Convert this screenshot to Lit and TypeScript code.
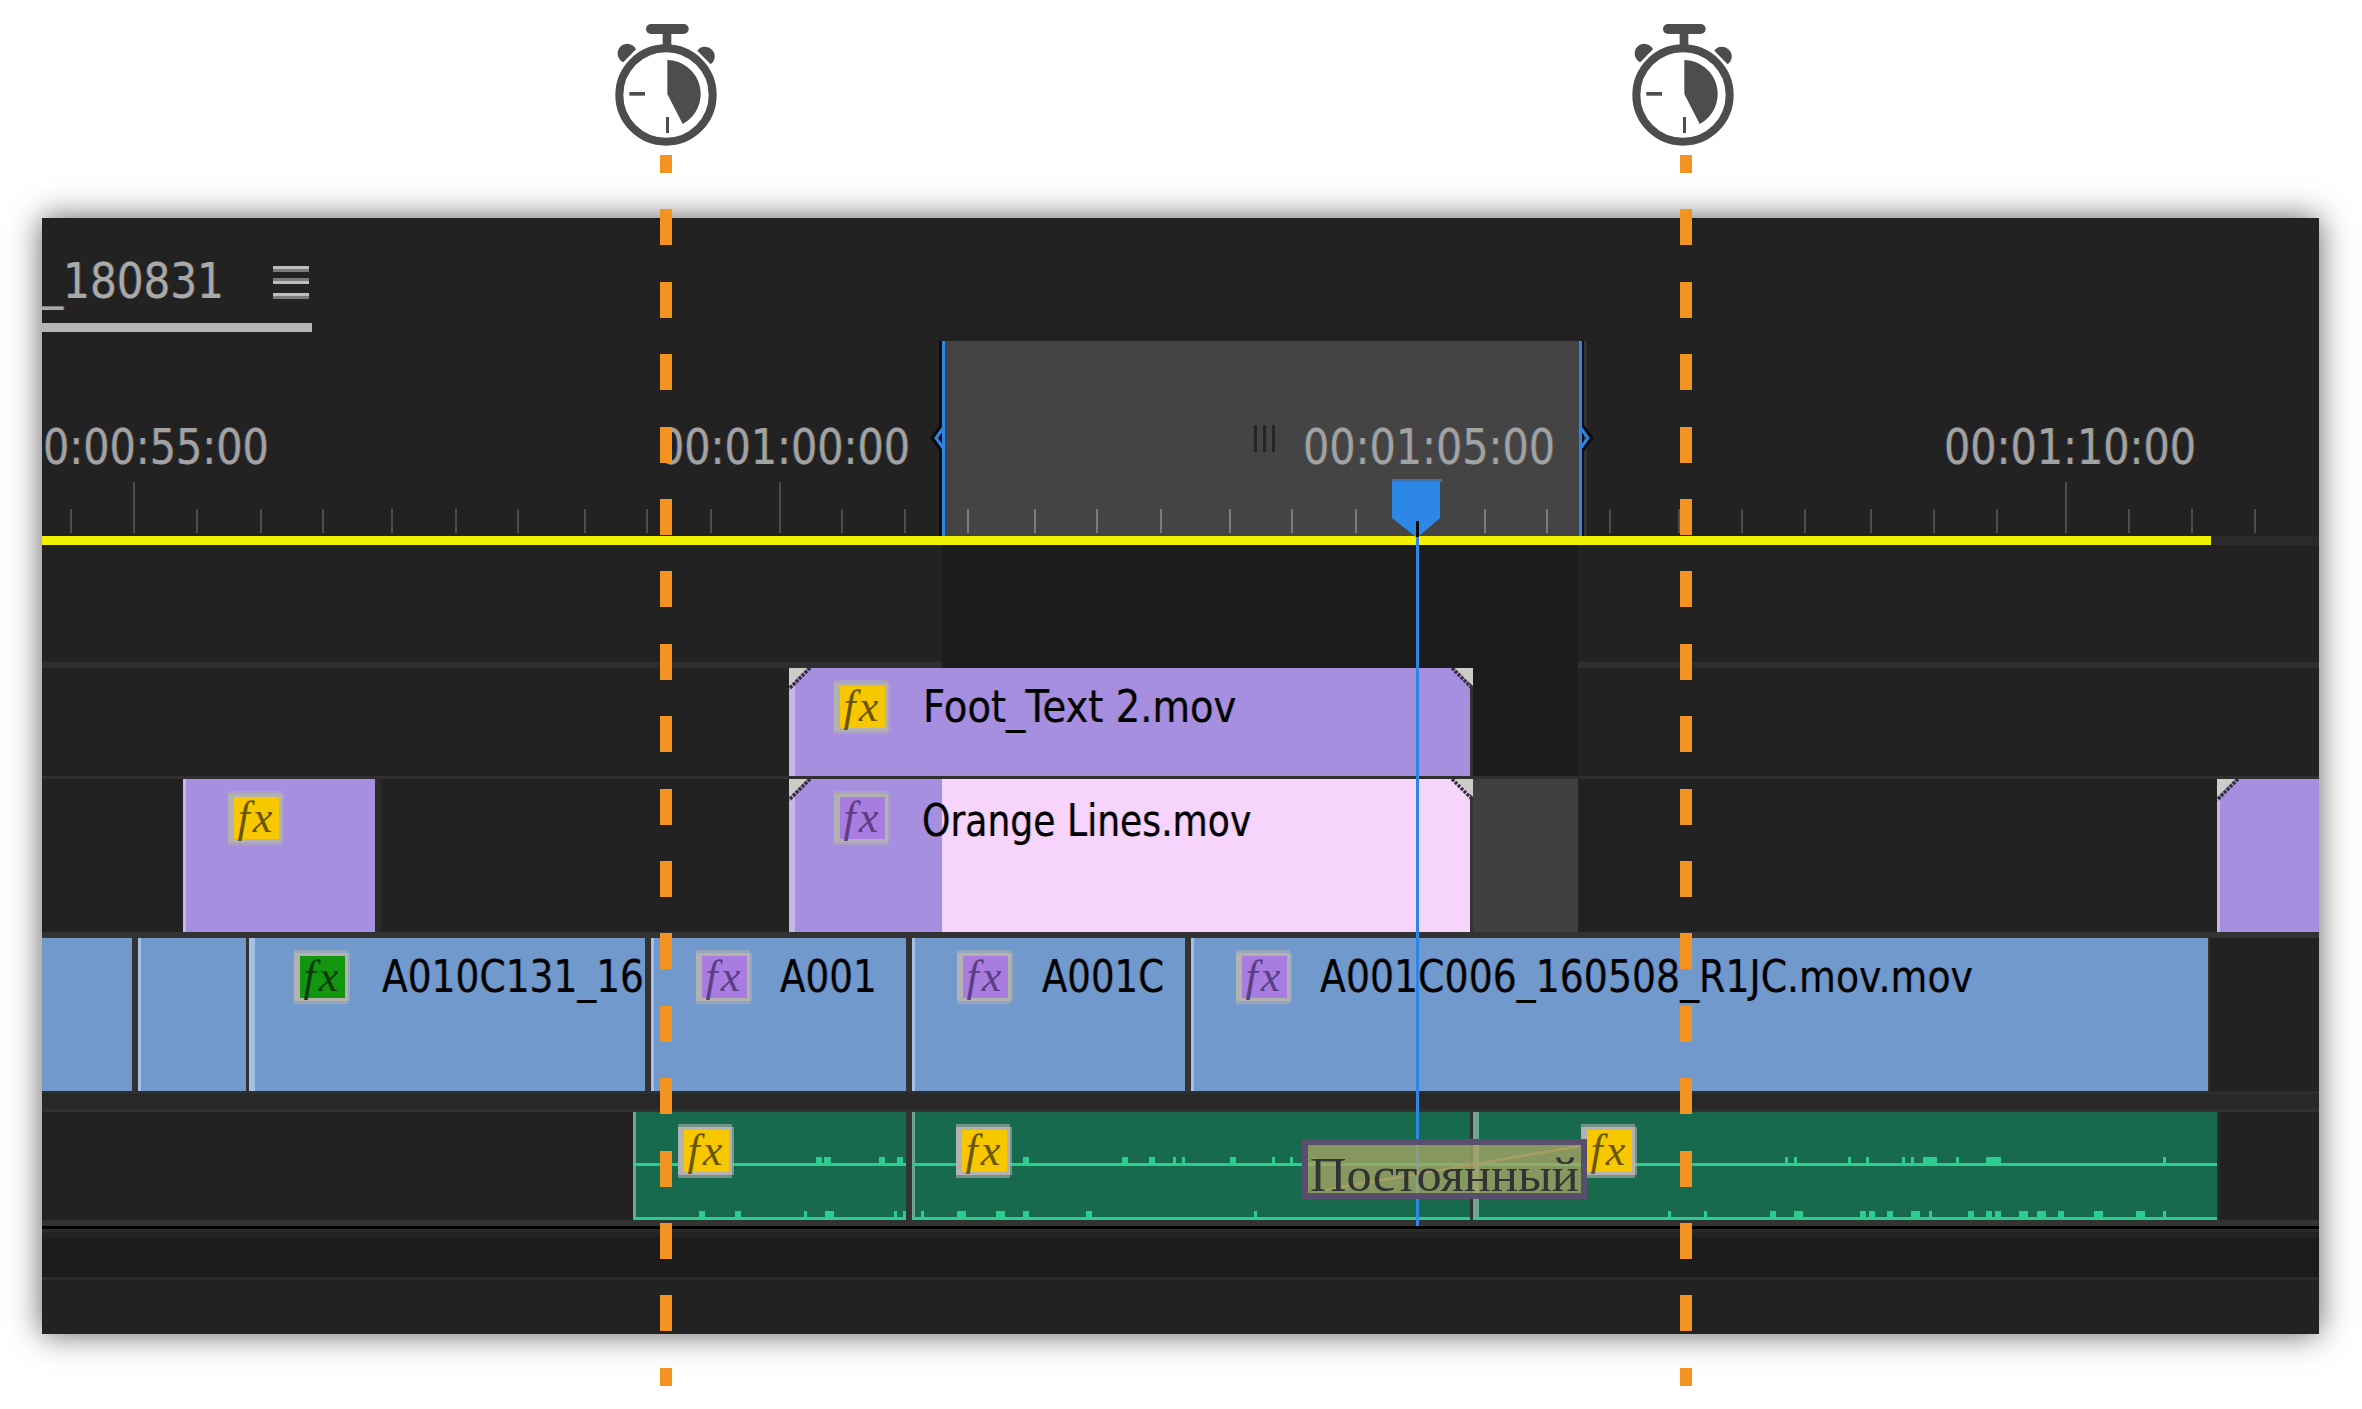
import { LitElement, html, css, svg } from "lit";
import { customElement } from "lit/decorators.js";

const PANEL_X = 42;
const px = (v: number) => `${v - PANEL_X}px`;
const TICKS: [number, boolean][] = [70,133,196,260,322,391,455,517,584,646,710,779,841,904,967,1034,1096,1160,1229,1291,1355,1484,1546,1609,1678,1741,1804,1870,1933,1996,2065,2128,2191,2254]
  .map((x) => [x, x === 133 || x === 779 || x === 2065] as [number, boolean]);
const LABELS: [string, number][] = [["0:00:55:00", 42.5], ["00:01:00:00", 658], ["00:01:05:00", 1303], ["00:01:10:00", 1944]];
const MID: [number, number][] = [[816,822],[824,831],[879,885],[897,903],[1023,1029],[1122,1128],[1149,1155],[1173,1176],[1182,1185],[1230,1236],[1272,1275],[1290,1293],[1313,1316],[1785,1788],[1794,1797],[1848,1851],[1866,1869],[1902,1905],[1911,1914],[1923,1937],[1956,1959],[1986,2001],[2163,2166]];
const LOW: [number, number][] = [[699,705],[735,741],[804,807],[825,834],[894,897],[903,906],[921,924],[957,966],[996,1005],[1023,1029],[1086,1092],[1254,1257],[1668,1671],[1704,1707],[1770,1776],[1794,1803],[1860,1866],[1869,1875],[1887,1893],[1911,1920],[1929,1932],[1968,1974],[1986,1992],[1995,2001],[2019,2028],[2037,2046],[2058,2064],[2094,2103],[2136,2145],[2163,2166]];
const VIDEO: [number, number, number][] = [[42,132,0],[138,246,3],[249,645,6],[651,906,3],[912,1185,3],[1191,2208,3]];
const VGAPS: [number, number][] = [[132,138],[246,249],[645,651],[906,912],[1185,1191],[2208,2210]];
const AUDIO: [number, number, number][] = [[633,906,3],[912,1470,3],[1473,2217,6]];
const VNAMES: [string, number, number][] = [["A010C131_16", 382, .835],["A001", 780, .83],["A001C", 1042, .824],["A001C006_160508_R1JC.mov.mov", 1320, .841]];

const fx = (x: number, cls: string) => html`<div class="fx ${cls}" style="left:${px(x)}"><span>fx</span></div>`;
const name = (text: string, x: number, sx: number, cls = "") =>
  html`<span class="name ${cls}" style="left:${px(x)};transform:scaleX(${sx})">${text}</span>`;
const cornerL = svg`<polygon points="0,0 18,0 0,18" fill="#cdcdc8"/><path d="M21 0 L0 21" stroke="#33303a" stroke-width="3.5" stroke-dasharray="3 1.2"/>`;
const cornerR = svg`<polygon points="24,0 6,0 24,18" fill="#cdcdc8"/><path d="M3 0 L24 21" stroke="#33303a" stroke-width="3.5" stroke-dasharray="3 1.2"/>`;

const watch = svg`
  <rect x="258" y="72" width="128" height="30" rx="15"/>
  <rect x="308" y="100" width="26" height="40"/>
  <circle cx="318" cy="285" r="140" fill="none" stroke="#4d4d4d" stroke-width="24"/>
  <path d="M228 148 A29 29 0 1 0 190 187 Z"/>
  <path d="M412 152 A29 29 0 1 1 452 193 Z"/>
  <path d="M322 180 A102 102 0 0 1 368 372 L322 282 Z"/>
  <rect x="208" y="276" width="47" height="11"/>
  <rect x="318" y="351" width="9" height="48"/>`;

@customElement("app-root")
export class AppRoot extends LitElement {
  static styles = css`
    :host { display: block; position: relative; width: 2362px; height: 1409px; overflow: hidden; background: #fff; padding-top: 218px; box-sizing: border-box; font-family: "DejaVu Sans", sans-serif; }
    .panel { position: relative; margin: 0 43px 0 42px; height: 1116px; background: #222; box-shadow: 0 0 30px rgba(0,0,0,.62); overflow: hidden; display: flex; flex-direction: column; }
    .head { height: 123px; flex: none; }
    .tab { width: 270px; height: 114px; box-sizing: border-box; border-bottom: 9px solid #b5b5b5; display: flex; align-items: flex-start; }
    .title { flex: none; width: 231px; margin-top: 35px; font-size: 49px; line-height: 57px; white-space: nowrap; color: #a9a9a9; }
    .title span { display: inline-block; transform: scaleX(.86); transform-origin: left top; }
    .lt { text-shadow: -1px 0 0 rgba(45,100,170,.5), 1px 0 0 rgba(170,100,40,.5); }
    .burger { flex: none; width: 36px; margin-top: 48px; display: flex; flex-direction: column; }
    .burger i { display: block; height: 6px; }
    .burger i:nth-child(1) { background: linear-gradient(#bdbdbd 50%, #7a7a7a 50%); }
    .burger i:nth-child(2) { margin-top: 6px; background: linear-gradient(#7a7a7a 50%, #bdbdbd 50%); }
    .burger i:nth-child(3) { margin-top: 9px; background: linear-gradient(#bdbdbd 50%, #7a7a7a 50%); }
    .ruler { height: 195px; flex: none; position: relative; }
    .sel { position: absolute; top: 0; bottom: 0; background: #444; }
    .edge { position: absolute; top: 0; bottom: 0; }
    .blue { background: #2d87e6; }
    .black { background: #0c0c0c; }
    .side { background: #333; }
    .tick { position: absolute; width: 2px; bottom: 3px; height: 24px; background: #4c4c4c; }
    .tick.long { height: 51px; }
    .tick.on { background: #7c7c7c; }
    .time { position: absolute; top: 78px; font-size: 49px; line-height: 57px; color: #a2a2a2; white-space: nowrap; transform: scaleX(.843); transform-origin: left top; }
    .grip { position: absolute; left: 1212px; top: 84px; display: flex; gap: 6px; }
    .grip i { display: block; width: 3px; height: 27px; background: #262626; }
    .chev { position: absolute; left: 885px; top: 80px; overflow: visible; }
    .yellow { height: 9px; flex: none; background: #2a2a2a; position: relative; }
    .yellow i { display: block; height: 9px; width: 2169px; background: #f2f200; }
    .blank { height: 117px; flex: none; }
    .sep { flex: none; }
    .s6 { height: 6px; background: #2e2e2e; }
    .s3 { height: 3px; background: #303030; }
    .s6b { height: 6px; background: #333; }
    .track { position: relative; flex: none; z-index: 1; }
    .h108 { height: 108px; }
    .h153 { height: 153px; }
    .clip { position: absolute; top: 0; bottom: 0; overflow: hidden; }
    .purple { background: #a68fdf; }
    .sky { background: #7199cc; }
    .forest { background: #176a4d; }
    .lit { position: absolute; left: 0; top: 0; bottom: 0; }
    .purple .lit { background: #c6b8ea; }
    .sky .lit { background: #a4c0e4; }
    .forest .lit { background: #6fa593; }
    .pink { position: absolute; left: 153px; right: 0; top: 0; bottom: 0; background: #f7d4fb; }
    .gapbar { position: absolute; top: 0; bottom: 0; }
    .corner { position: absolute; top: 0; width: 24px; height: 24px; }
    .dim { position: absolute; left: 900px; width: 636px; top: 327px; height: 231px; background: #1c1c1c; }
    .name { position: absolute; top: 16px; font-size: 45px; line-height: 45px; color: #000; white-space: nowrap; transform-origin: left top; text-shadow: -1px 0 0 rgba(122,60,0,.3), 1px 0 0 rgba(30,90,210,.3); }
    .name.low { top: 19px; }
    .fx { position: absolute; top: 15px; width: 54px; height: 48px; margin-left: -6px; box-sizing: border-box; border: solid #b2b2b2; border-width: 3px 3px 3px 6px; box-shadow: 2px 0 0 rgba(175,175,175,.6), 0 3px 0 rgba(175,175,175,.6), 0 -3px 0 rgba(175,175,175,.6); display: flex; align-items: center; justify-content: center; font-family: "Liberation Serif", serif; font-style: italic; font-size: 44px; line-height: 42px; letter-spacing: 3px; }
    .fx span { display: block; }
    .y { background: #f7c800; color: #6b5600; }
    .g { background: #13960f; color: #0b3a0c; }
    .v { background: #a97ce0; color: #5a3f85; }
    .line { position: absolute; height: 3px; background: #2bce8e; }
    .line.m { top: 51px; }
    .line.b { top: 105px; }
    .wv { position: absolute; height: 6px; background: #2bce8e; }
    .wv.m { top: 45px; }
    .wv.b { top: 99px; }
    .fill { flex: none; }
    .playhead { position: absolute; left: 1350px; top: 261px; width: 50px; height: 747px; z-index: 2; }
    .playhead svg { display: block; position: absolute; left: 0; top: 0; }
    .phline { position: absolute; left: 24px; top: 58px; bottom: 0; width: 3px; background: #2d87e6; }
    .phdark { position: absolute; left: 24px; top: 42px; width: 3px; height: 16px; background: #0c0c0c; }
    .tip { position: absolute; left: 1260px; top: 921px; width: 285px; height: 60px; box-sizing: border-box; border: solid #574f6b; border-width: 6px; z-index: 3; background: rgba(165,165,100,.78); }
    .tip svg { position: absolute; left: 0; top: 0; }
    .tip span { position: absolute; left: 2px; top: 12px; font-family: "Liberation Serif", serif; font-size: 48px; line-height: 36px; height: 36px; color: #333; white-space: nowrap; transform: scaleX(1.05); transform-origin: left top; }
    .dash { position: absolute; top: 155px; width: 12px; height: 1231px; background: repeating-linear-gradient(to bottom, #f39321 0 18px, transparent 18px 54.4px, #f39321 54.4px 72.4px); z-index: 4; }
    .watch { position: absolute; top: 0; width: 200px; height: 240px; fill: #4d4d4d; z-index: 4; }
  `;

  render() {
    return html`
      <svg class="watch" style="left:560px" viewBox="0 0 600 720">${watch}</svg>
      <svg class="watch" style="left:1577.33px" viewBox="0 0 600 720">${watch}</svg>
      <div class="panel">
        <div class="head">
          <div class="tab">
            <div class="title"><span class="lt">_180831</span></div>
            <div class="burger"><i></i><i></i><i></i></div>
          </div>
        </div>
        <div class="ruler">
          <div class="sel" style="left:${px(945)};width:634px"></div>
          ${TICKS.map(([x, long]) => html`<i class="tick ${long ? "long" : ""} ${x > 945 && x < 1578 ? "on" : ""}" style="left:${px(x)}"></i>`)}
          ${LABELS.map(([t, x]) => html`<span class="time lt" style="left:${px(x)}">${t}</span>`)}
          <div class="grip"><i></i><i></i><i></i></div>
          <div class="edge black" style="left:${px(939)};width:3px"></div>
          <div class="edge blue" style="left:${px(942)};width:3px"></div>
          <div class="edge blue" style="left:${px(1579)};width:3px"></div>
          <div class="edge black" style="left:${px(1582)};width:2px"></div>
          <div class="edge side" style="left:${px(1584)};width:3px"></div>
          <svg class="chev" width="670" height="32" viewBox="0 0 670 32" fill="none">
            <path d="M15 6 L7 17 L15 28" stroke="#0c0c0c" stroke-width="6"/>
            <path d="M17 6 L9 17 L17 28" stroke="#2d87e6" stroke-width="3"/>
            <path d="M655 6 L663 17 L655 28" stroke="#0c0c0c" stroke-width="6"/>
            <path d="M653 6 L661 17 L653 28" stroke="#2d87e6" stroke-width="3"/>
          </svg>
        </div>
        <div class="yellow"><i></i></div>
        <div class="blank"></div>
        <div class="sep s6"></div>
        <div class="track h108">
          <div class="clip purple" style="left:${px(789)};width:681px">
            <div class="lit" style="width:6px"></div>
          </div>
          <div class="gapbar side" style="left:${px(1470)};width:3px"></div>
          ${fx(840, "y")}
          ${name("Foot_Text 2.mov", 923, .857)}
          <svg class="corner" style="left:${px(789)}" viewBox="0 0 24 24">${cornerL}</svg>
          <svg class="corner" style="left:${px(1449)}" viewBox="0 0 24 24">${cornerR}</svg>
        </div>
        <div class="sep s3"></div>
        <div class="track h153">
          <div class="clip purple" style="left:${px(183)};width:192px"><div class="lit" style="width:3px"></div></div>
          <div class="gapbar" style="left:${px(375)};width:6px;background:#2b2b2b"></div>
          ${fx(234, "y")}
          <div class="clip purple" style="left:${px(789)};width:681px">
            <div class="lit" style="width:6px"></div>
            <div class="pink"></div>
          </div>
          <div class="gapbar side" style="left:${px(1470)};width:3px"></div>
          <div class="gapbar" style="left:${px(1473)};width:105px;background:#404040"></div>
          ${fx(840, "v")}
          ${name("Orange Lines.mov", 922, .803, "low")}
          <svg class="corner" style="left:${px(789)}" viewBox="0 0 24 24">${cornerL}</svg>
          <svg class="corner" style="left:${px(1449)}" viewBox="0 0 24 24">${cornerR}</svg>
          <div class="clip purple" style="left:${px(2217)};width:102px"><div class="lit" style="width:3px"></div></div>
          <svg class="corner" style="left:${px(2217)}" viewBox="0 0 24 24">${cornerL}</svg>
        </div>
        <div class="sep s6b"></div>
        <div class="track h153">
          ${VIDEO.map(([a, b, l]) => html`<div class="clip sky" style="left:${px(a)};width:${b - a}px"><div class="lit" style="width:${l}px"></div></div>`)}
          ${VGAPS.map(([a, b]) => html`<div class="gapbar side" style="left:${px(a)};width:${b - a}px"></div>`)}
          ${fx(300, "g")}${fx(702, "v")}${fx(963, "v")}${fx(1242, "v")}
          ${name(...VNAMES[0])}${name(...VNAMES[1])}${name(...VNAMES[2])}${name(...VNAMES[3])}
        </div>
        <div class="sep" style="height:3px;background:#2e2e2e"></div>
        <div class="sep" style="height:15px;background:#282828"></div>
        <div class="sep" style="height:3px;background:#303030"></div>
        <div class="track h108">
          ${AUDIO.map(([a, b, l]) => html`<div class="clip forest" style="left:${px(a)};width:${b - a}px"><div class="lit" style="width:${l}px"></div></div>`)}
          <div class="gapbar side" style="left:${px(906)};width:6px"></div>
          <div class="gapbar side" style="left:${px(1470)};width:3px"></div>
          <div class="gapbar" style="left:${px(2217)};width:2px;background:#2c2c2c"></div>
          ${AUDIO.map(([a, b]) => html`<i class="line m" style="left:${px(a)};width:${b - a}px"></i><i class="line b" style="left:${px(a)};width:${b - a}px"></i>`)}
          ${MID.map(([a, b]) => html`<i class="wv m" style="left:${px(a)};width:${b - a}px"></i>`)}
          ${LOW.map(([a, b]) => html`<i class="wv b" style="left:${px(a)};width:${b - a}px"></i>`)}
          ${fx(684, "y")}${fx(962, "y")}${fx(1587, "y")}
        </div>
        <div class="sep s6b"></div>
        <div class="sep" style="height:3px;background:#000"></div>
        <div class="sep" style="height:3px;background:#2b2b2b"></div>
        <div class="sep" style="height:6px;background:#232323"></div>
        <div class="sep" style="height:39px;background:#1c1c1c"></div>
        <div class="sep" style="height:3px;background:#2b2b2b"></div>
        <div class="fill"></div>
        <div class="dim"></div>
        <div class="playhead">
          <svg width="50" height="58" viewBox="0 0 50 58">
            <rect width="50" height="3" fill="#3f72ad"/>
            <polygon points="0,3 48,3 48,39 26,58 24,58 0,39" fill="#2d87e6"/>
          </svg>
          <div class="phdark"></div>
          <div class="phline"></div>
        </div>
        <div class="tip">
          <svg width="273" height="48" viewBox="0 0 273 48"><path d="M10 46 L272 1" stroke="#a89e62" stroke-width="2.5" fill="none"/></svg>
          <span>Постоянный</span>
        </div>
      </div>
      <div class="dash" style="left:660px"></div>
      <div class="dash" style="left:1680px"></div>
    `;
  }
}
